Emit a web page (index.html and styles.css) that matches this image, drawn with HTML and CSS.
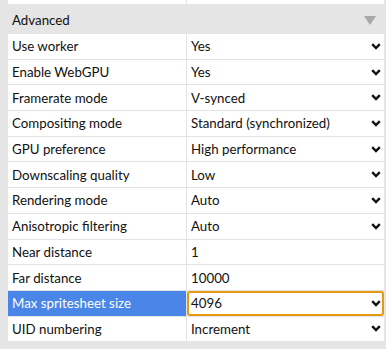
FILE: index.html
```html
<!DOCTYPE html>
<html>
<head>
<meta charset="utf-8">
<link rel="stylesheet" href="styles.css">
</head>
<body>
<div class="panel">
  <div class="grid top-stub">
    <div class="cell"></div>
    <div class="cell"></div>
  </div>
  <div class="section-head">
    <span>Advanced</span>
    <svg class="collapse" width="12" height="9" viewBox="0 0 12 9"><polygon points="0,0 12,0 6,9" fill="#a9a9a9"/></svg>
  </div>
  <div class="grid rows">
    <div class="cell name">Use worker</div>
    <div class="cell value select">Yes<svg class="chev" width="10" height="7" viewBox="0 0 10 7"><polyline points="1.2,1.2 5,5 8.8,1.2" fill="none" stroke="#111" stroke-width="2.4"/></svg></div>

    <div class="cell name">Enable WebGPU</div>
    <div class="cell value select">Yes<svg class="chev" width="10" height="7" viewBox="0 0 10 7"><polyline points="1.2,1.2 5,5 8.8,1.2" fill="none" stroke="#111" stroke-width="2.4"/></svg></div>

    <div class="cell name">Framerate mode</div>
    <div class="cell value select">V-synced<svg class="chev" width="10" height="7" viewBox="0 0 10 7"><polyline points="1.2,1.2 5,5 8.8,1.2" fill="none" stroke="#111" stroke-width="2.4"/></svg></div>

    <div class="cell name">Compositing mode</div>
    <div class="cell value select">Standard (synchronized)<svg class="chev" width="10" height="7" viewBox="0 0 10 7"><polyline points="1.2,1.2 5,5 8.8,1.2" fill="none" stroke="#111" stroke-width="2.4"/></svg></div>

    <div class="cell name">GPU preference</div>
    <div class="cell value select">High performance<svg class="chev" width="10" height="7" viewBox="0 0 10 7"><polyline points="1.2,1.2 5,5 8.8,1.2" fill="none" stroke="#111" stroke-width="2.4"/></svg></div>

    <div class="cell name">Downscaling quality</div>
    <div class="cell value select">Low<svg class="chev" width="10" height="7" viewBox="0 0 10 7"><polyline points="1.2,1.2 5,5 8.8,1.2" fill="none" stroke="#111" stroke-width="2.4"/></svg></div>

    <div class="cell name">Rendering mode</div>
    <div class="cell value select">Auto<svg class="chev" width="10" height="7" viewBox="0 0 10 7"><polyline points="1.2,1.2 5,5 8.8,1.2" fill="none" stroke="#111" stroke-width="2.4"/></svg></div>

    <div class="cell name">Anisotropic filtering</div>
    <div class="cell value select">Auto<svg class="chev" width="10" height="7" viewBox="0 0 10 7"><polyline points="1.2,1.2 5,5 8.8,1.2" fill="none" stroke="#111" stroke-width="2.4"/></svg></div>

    <div class="cell name">Near distance</div>
    <div class="cell value">1</div>

    <div class="cell name">Far distance</div>
    <div class="cell value">10000</div>

    <div class="cell name selected">Max spritesheet size</div>
    <div class="cell value select focused">4096<svg class="chev" width="10" height="7" viewBox="0 0 10 7"><polyline points="1.2,1.2 5,5 8.8,1.2" fill="none" stroke="#111" stroke-width="2.4"/></svg></div>

    <div class="cell name">UID numbering</div>
    <div class="cell value select">Increment<svg class="chev" width="10" height="7" viewBox="0 0 10 7"><polyline points="1.2,1.2 5,5 8.8,1.2" fill="none" stroke="#111" stroke-width="2.4"/></svg></div>
  </div>
</div>
</body>
</html>
```

FILE: styles.css
```css
html, body {
  margin: 0;
  padding: 0;
}
body {
  background: #e5e5e5;
  font-family: Lato, "Open Sans", sans-serif;
  font-size: 13.3px;
  color: #111;
  width: 386px;
  height: 349px;
  overflow: hidden;
}
.panel {
  padding: 0 2px 0 8px;
  display: flex;
  flex-direction: column;
}
.grid {
  display: grid;
  grid-template-columns: 178px 1fr;
  column-gap: 1px;
  row-gap: 1px;
  background: #e3e3e3;
}
.top-stub {
  height: 4px;
  margin-bottom: 1px;
}
.cell {
  background: #fff;
}
.section-head {
  height: 29px;
  display: flex;
  align-items: center;
  justify-content: space-between;
  padding: 0 8px 0 4px;
  background: #e5e5e5;
}
.collapse {
  margin-top: 1px;
}
.rows {
  grid-auto-rows: 24.7px;
}
.name, .value {
  display: flex;
  align-items: center;
  padding: 0 4px;
  white-space: nowrap;
}
.select {
  justify-content: space-between;
  padding-right: 3px;
}
.selected {
  background: #4a86e8;
  color: #fff;
}
.focused {
  box-shadow: inset 0 0 0 2px #e69a12;
  border-radius: 3px;
}
```
